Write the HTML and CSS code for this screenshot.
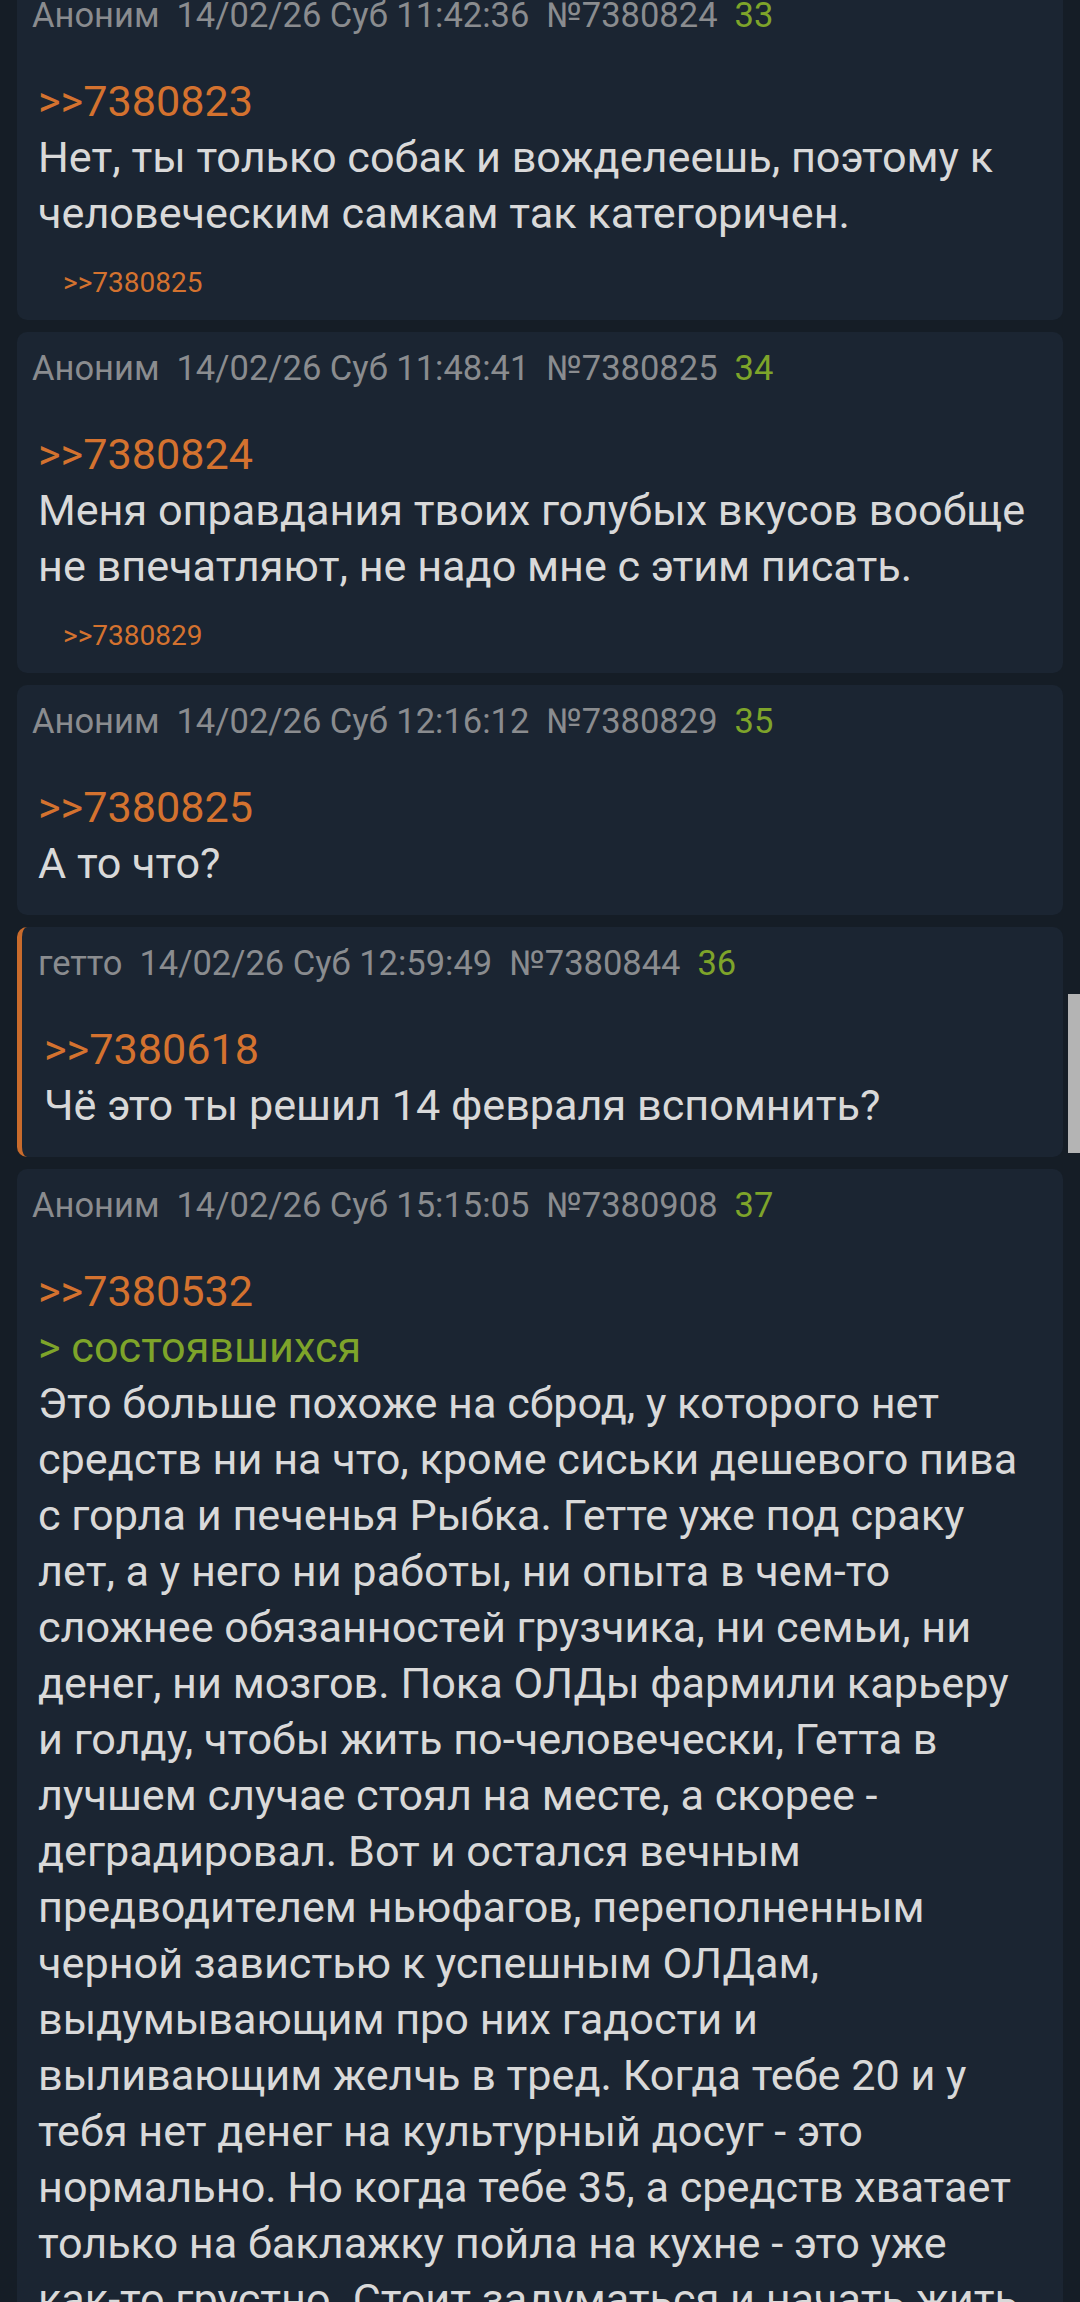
FILE: index.html
```html
<!DOCTYPE html>
<html lang="ru">
<head>
<meta charset="utf-8">
<link rel="stylesheet" href="styles.css">
</head>
<body>
<div class="thread">
  <article class="post">
    <header class="meta"><span class="name">Аноним</span><span class="date">14/02/26 Суб 11:42:36</span><span class="num">№7380824</span><span class="idx">33</span></header>
    <div class="text"><a class="ref">&gt;&gt;7380823</a><br>Нет, ты только собак и вожделеешь, поэтому к человеческим самкам так категоричен.</div>
    <div class="replies"><a class="ref-small">&gt;&gt;7380825</a></div>
  </article>
  <article class="post">
    <header class="meta"><span class="name">Аноним</span><span class="date">14/02/26 Суб 11:48:41</span><span class="num">№7380825</span><span class="idx">34</span></header>
    <div class="text"><a class="ref">&gt;&gt;7380824</a><br>Меня оправдания твоих голубых вкусов вообще не впечатляют, не надо мне с этим писать.</div>
    <div class="replies"><a class="ref-small">&gt;&gt;7380829</a></div>
  </article>
  <article class="post">
    <header class="meta"><span class="name">Аноним</span><span class="date">14/02/26 Суб 12:16:12</span><span class="num">№7380829</span><span class="idx">35</span></header>
    <div class="text"><a class="ref">&gt;&gt;7380825</a><br>А то что?</div>
  </article>
  <article class="post post-op">
    <header class="meta"><span class="name">гетто</span><span class="date">14/02/26 Суб 12:59:49</span><span class="num">№7380844</span><span class="idx">36</span></header>
    <div class="text"><a class="ref">&gt;&gt;7380618</a><br>Чё это ты решил 14 февраля вспомнить?</div>
  </article>
  <article class="post">
    <header class="meta"><span class="name">Аноним</span><span class="date">14/02/26 Суб 15:15:05</span><span class="num">№7380908</span><span class="idx">37</span></header>
    <div class="text"><a class="ref">&gt;&gt;7380532</a><br><span class="quote">&gt; состоявшихся</span><br>Это больше похоже на сброд, у которого нет средств ни на что, кроме сиськи дешевого пива с горла и печенья Рыбка. Гетте уже под сраку лет, а у него ни работы, ни опыта в чем-то сложнее обязанностей грузчика, ни семьи, ни денег, ни мозгов. Пока ОЛДы фармили карьеру и голду, чтобы жить по-человечески, Гетта в лучшем случае стоял на месте, а скорее - деградировал. Вот и остался вечным предводителем ньюфагов, переполненным черной завистью к успешным ОЛДам, выдумывающим про них гадости и выливающим желчь в тред. Когда тебе 20 и у тебя нет денег на культурный досуг - это нормально. Но когда тебе 35, а средств хватает только на баклажку пойла на кухне - это уже как-то грустно. Стоит задуматься и начать жить по-человечески.</div>
  </article>
</div>
<div class="scrollbar"></div>
</body>
</html>
```
FILE: styles.css
```css
html, body {
  margin: 0;
  padding: 0;
  background: #151d26;
  overflow: hidden;
  height: 2302px;
}
body {
  font-family: Roboto, "Noto Sans", sans-serif;
  position: relative;
}
.thread {
  display: flex;
  flex-direction: column;
  gap: 12px;
  padding: 0 17px;
  margin-top: -21px;
}
.post {
  background: #1b2532;
  border-radius: 10px;
  padding: 16px 31px 23px 15px;
}
.post-op {
  border-left: 5px solid #c96b2c;
  padding-left: 16px;
}
.meta {
  display: flex;
  gap: 17px;
  font-size: 34.5px;
  line-height: 40px;
  color: #8a8c8f;
}
.idx {
  color: #7ea42a;
}
.text {
  margin-top: 39px;
  padding-left: 6px;
  font-size: 43.2px;
  line-height: 56px;
  color: #d9d9d9;
}
.ref {
  color: #d4722f;
}
.quote {
  color: #7ea42a;
}
.replies {
  margin-top: 27px;
  padding-left: 31px;
  font-size: 28px;
  line-height: 28px;
}
.ref-small {
  color: #d4722f;
}
.scrollbar {
  position: absolute;
  right: 0;
  top: 994px;
  width: 12px;
  height: 159px;
  background: #b4b4b4;
}
```
